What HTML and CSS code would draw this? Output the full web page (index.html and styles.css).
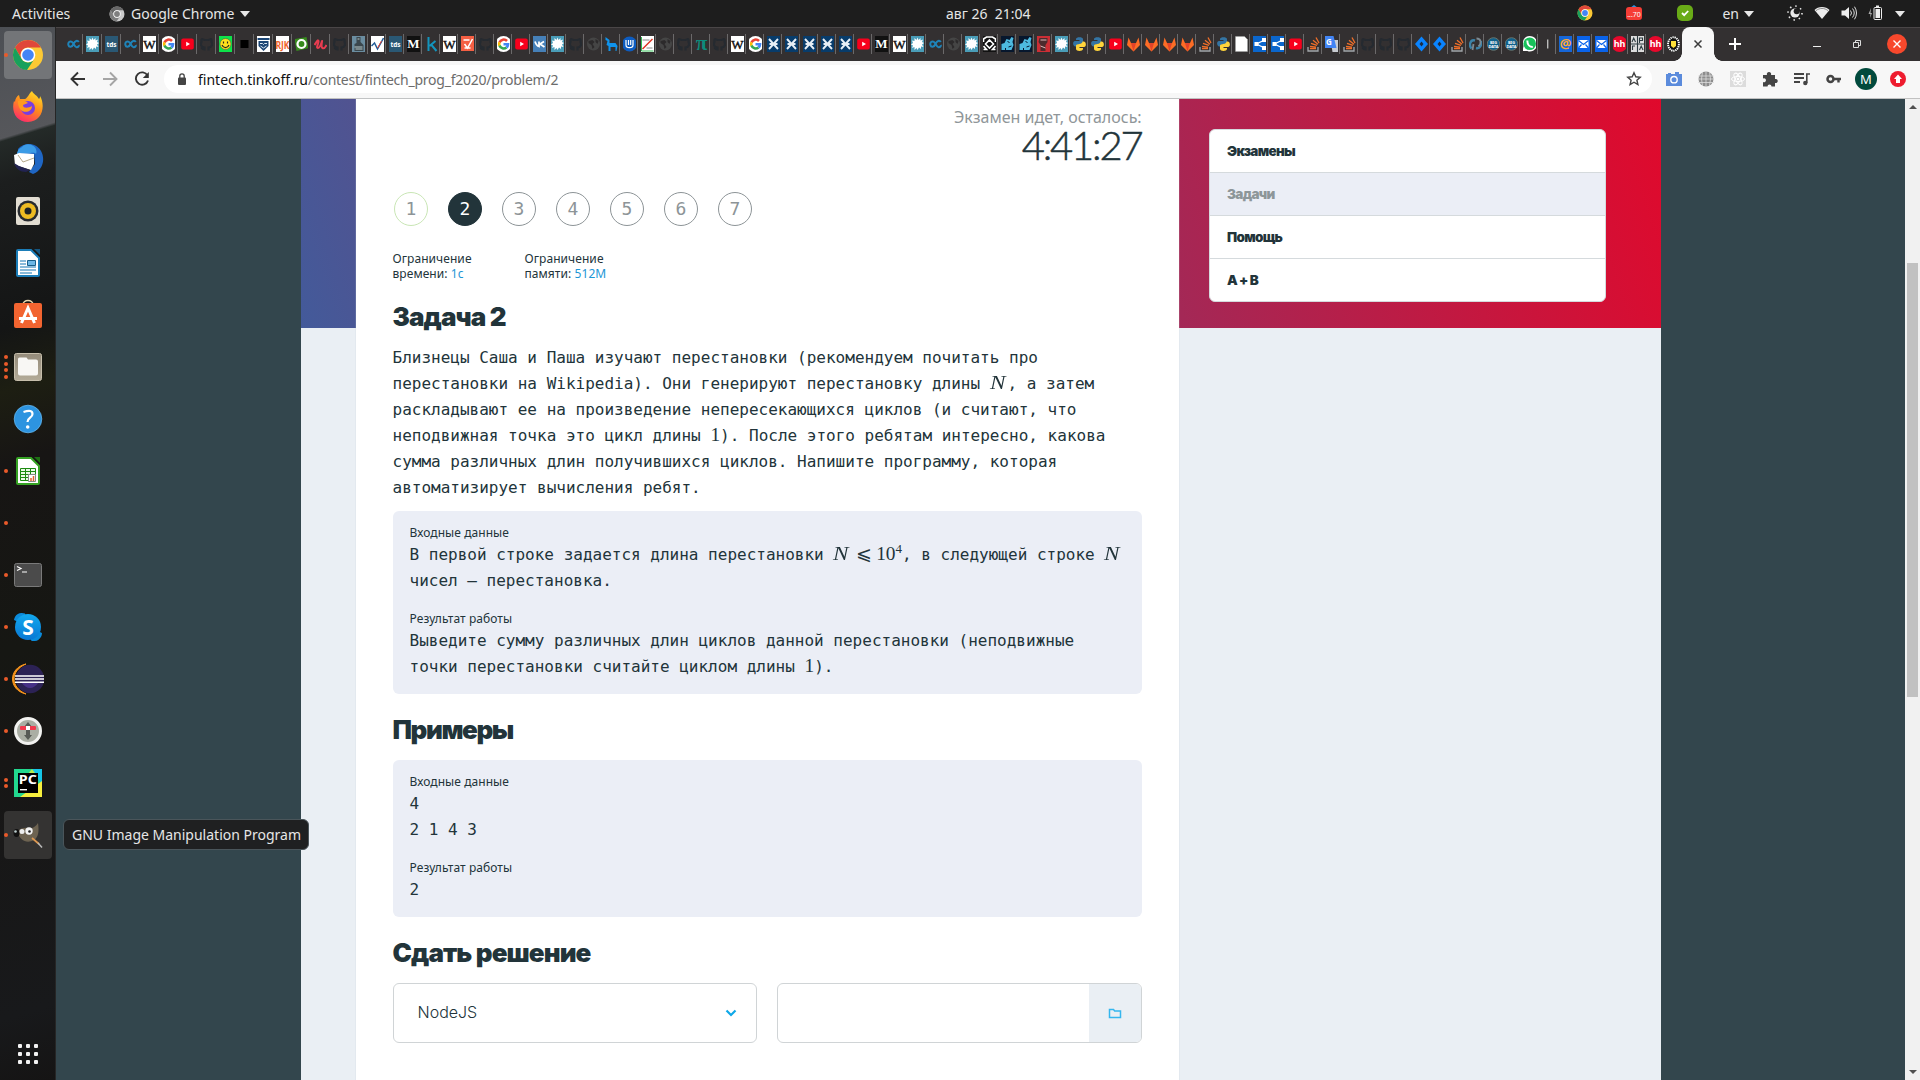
FILE: index.html
```html
<!DOCTYPE html>
<html lang="ru">
<head>
<meta charset="utf-8">
<title>Задача 2</title>
<link rel="stylesheet" href="styles.css">
</head>
<body>
<svg class="gradients" width="0" height="0">
  <defs>
    <linearGradient id="fx" x1="0.8" y1="0" x2="0.3" y2="1"><stop offset="0" stop-color="#ffe226"/><stop offset=".5" stop-color="#ff8a1e"/><stop offset="1" stop-color="#ff2a6a"/></linearGradient>
    <linearGradient id="sky" x1="0" y1="0" x2="0" y2="1"><stop offset="0" stop-color="#12a8ee"/><stop offset="1" stop-color="#0a78d4"/></linearGradient>
    <linearGradient id="tan" x1="0" y1="0" x2="0" y2="1"><stop offset="0" stop-color="#948b7a"/><stop offset="1" stop-color="#b3ab98"/></linearGradient>
  </defs>
</svg>
<svg class="symbols">
  <symbol id="coursera" viewBox="1.5 0 13 16"><path d="M13.300 6C12 4 9.500 4.500 8 8S3.500 11.500 2.900 9s1.500-4.500 3.600-3S9 11 11 11.200s2.500-1.500 2.200-2.200" fill="none" stroke="#1f83b8" stroke-width="2"/></symbol>
  <symbol id="star" viewBox="1.5 0 13 16"><path fill="#4a9db8" d="M0 0h16v16H0z"/><path fill="#fff" d="M8 1.500l1 2.500 2-2v2.500l2.500-1-1 2.500 2 1-2 1.500 1.500 2.500-2.500-.5v2.500l-2-1.500L8 14l-1-2-2 2 0-3-2.500 1 1-2.500-2-1 2-1.500L2.500 4.500 5 5V2l2 2z"/></symbol>
  <symbol id="tds" viewBox="1.5 0 13 16"><path fill="#2a5874" d="M0 0h16v16H0z"/><text x="8" y="10.500" font-size="6.500" font-weight="700" text-anchor="middle" fill="#fff">tds</text></symbol>
  <symbol id="wiki" viewBox="1.5 0 13 16"><path fill="#fff" d="M0 0h16v16H0z"/><text class="serif" x="8" y="12.700" font-size="13" text-anchor="middle" fill="#111" stroke="#111" stroke-width=".4">W</text></symbol>
  <symbol id="google" viewBox="1.5 0 13 16"><circle cx="8" cy="8" r="8" fill="#fff"/><g fill="none" stroke-width="2.600"><path d="M4 6.500A4.500 4.500 0 0 1 11.500 5" stroke="#ea4335"/><path d="M4 9.800a4.500 4.500 0 0 1 0-3.500" stroke="#fbbc05"/><path d="M4 9.500a4.500 4.500 0 0 0 7 2" stroke="#34a853"/><path d="M8 8.200h4.500a4.500 4.500 0 0 1-1.500 3.300" stroke="#4285f4"/></g></symbol>
  <symbol id="yt" viewBox="1.5 0 13 16"><rect x="1.700" y="2.500" width="12.600" height="11" rx="2" fill="#f8001c"/><path fill="#fff" d="M6.700 5.700v4.600L10.500 8z"/></symbol>
  <symbol id="gh" viewBox="1.5 0 13 16"><path fill="none" stroke="#252a30" stroke-width="2.200" d="M6 14.500v-3C2 11 2 8 3 6c-.3-1.500 0-3 .5-3L6 4h4l2.500-1c.5 0 .8 1.500.5 3 1 2 1 5-3 5.500v3M6 13c-2 .5-2-1-3.500-1.500"/></symbol>
  <symbol id="globe" viewBox="1.5 0 13 16"><circle cx="8" cy="8" r="6.500" fill="#454545"/><path fill="#2c2a2b" d="M3 5l4-1 2 2-2 2 2 3-2 2-1-4-3-2zM10 3l3 2-1 3-2-2z"/></symbol>
  <symbol id="smile" viewBox="1.5 0 13 16"><path fill="#0de24a" d="M0 0h16v16H0z"/><circle cx="8" cy="8" r="5.500" fill="#ffe21d" stroke="#554" stroke-width=".6"/><path d="M6 5.500v2M10 5.500v2M4.500 9c1.500 3.500 5.500 3.500 7 0" stroke="#222" stroke-width="1.200" fill="none"/></symbol>
  <symbol id="square" viewBox="1.5 0 13 16"><path d="M4 4h8v8H4z"/></symbol>
  <symbol id="crest" viewBox="1.5 0 13 16"><path fill="#fff" d="M0 0h16v16H0z"/><path fill="#1c4675" d="M2 2h12v2H2zM3 5h10v5l-5 5-5-5z"/><path d="M4.500 7.500h2.500l1 1 1-1h2.500M5 10l3 2 3-2" stroke="#dce8f2" fill="none"/></symbol>
  <symbol id="rjk" viewBox="1.5 0 13 16"><path fill="#fff" d="M0 0h16v16H0z"/><text x="8" y="12.500" font-size="11" font-weight="700" textLength="14" lengthAdjust="spacingAndGlyphs" text-anchor="middle" fill="#f0642c">RJK</text></symbol>
  <symbol id="ring" viewBox="1.5 0 13 16"><path fill="#378b1d" d="M1 3l12-2 2 11-12 3z"/><circle cx="8" cy="8" r="4" fill="none" stroke="#fff" stroke-width="2.200"/></symbol>
  <symbol id="udemy" viewBox="1.5 0 13 16"><path d="M2 9c2-3 3.500-6 4-4S3 12 5.500 12 9 6 9.500 5 8 11 10 12s3-1 4-3" fill="none" stroke="#e83c50" stroke-width="2"/></symbol>
  <symbol id="statue" viewBox="1.5 0 13 16"><path fill="#6b8da0" d="M0 0h16v16H0z"/><path fill="#3b474d" d="M6 1h4v5l3 3v6H4V8l2-1z"/><path d="M4 11h8M5 13h7M7 3h2" stroke="#bcc" /></symbol>
  <symbol id="chart" viewBox="1.5 0 13 16"><path fill="#fff" d="M0 0h16v16H0z"/><path d="M2 10l3-3 3 6 6-11" fill="none" stroke="#215b96" stroke-width="1.500"/><path d="M8 12l4-7" stroke="#e43"/></symbol>
  <symbol id="medium" viewBox="1.5 0 13 16"><path fill="#111" d="M0 0h16v16H0z"/><text class="serif" x="8" y="12.300" font-size="13" font-weight="700" text-anchor="middle" fill="#fff">M</text></symbol>
  <symbol id="kaggle" viewBox="1.5 0 13 16"><path d="M5 1v14M12 5l-6 5M8 9l5 6" stroke="#1394bd" stroke-width="2" fill="none"/></symbol>
  <symbol id="check" viewBox="1.5 0 13 16"><path fill="#f55f43" d="M1.500 0h13v15h-13z"/><path d="M4 4h6M5 8l3 4 5-9M5 12h6" stroke="#fff" stroke-width="1.500" fill="none"/></symbol>
  <symbol id="vk" viewBox="1.5 0 13 16"><path fill="#4680b8" d="M0 0h16v16H0z"/><path d="M3.500 5.500c1 3 2 4.500 4 5V5.500M12.500 5.500L8.500 8l4.500 3" stroke="#fff" stroke-width="1.800" fill="none"/></symbol>
  <symbol id="llama" viewBox="1.5 0 13 16"><path fill="#0f93ec" d="M2 1l4 3v3h6l2 3-1 5h-1v-4H7v4H5v-5L3 9l1-4-2-1z"/></symbol>
  <symbol id="iu" viewBox="1.5 0 13 16"><circle cx="8" cy="8" r="7.500" fill="#0d5cc0"/><path d="M4.500 4v5c0 3.500 7 3.500 7 0V4M7 4v5M9.200 4v5" fill="none" stroke="#fff" stroke-width="1.200"/></symbol>
  <symbol id="plot" viewBox="1.5 0 13 16"><path fill="#fff" d="M0 0h16v16H0z"/><path d="M3 13L13 3" stroke="#d32" stroke-width="1.500"/><path d="M2 1v14h12" stroke="#3b5" fill="none"/><path d="M3 4h7M7 12h6" stroke="#888"/></symbol>
  <symbol id="pi" viewBox="1.5 0 13 16"><text class="serif" x="8" y="13.500" font-size="21" font-weight="700" text-anchor="middle" fill="#0d8b7c">π</text></symbol>
  <symbol id="cross" viewBox="1.5 0 13 16"><path fill="#083c6b" d="M0 0h16v16H0z"/><path d="M3.500 3l4.500 5 4.500-5M3.500 13L8 8l4.500 5M4 8h8" stroke="#e6eef5" stroke-width="1.900" fill="none"/></symbol>
  <symbol id="diamond" viewBox="1.5 0 13 16"><path fill="#111" d="M0 0h16v16H0z"/><path d="M2 6V3l3-2h6l3 2v3M8 4l4 4-4 4-4-4zM2 10l3 3.500H2M14 10l-3 3.500h3" fill="none" stroke="#fff" stroke-width="1.600"/></symbol>
  <symbol id="horse" viewBox="1.5 0 13 16"><path fill="#07172d" d="M0 0h16v16H0z"/><path fill="#4dbbe0" d="M2 14V8l3-1 2-4 3 1 2-3 2 1-1 4 1 3-2 5z"/><path stroke="#07172d" d="M6 15v-3M9 11l3-1M8 5l2 2"/></symbol>
  <symbol id="red" viewBox="1.5 0 13 16"><path fill="#cc2e35" d="M0 0h16v16H0z"/><path fill="#4c2b2d" d="M4 2h8v4l-2 3v6H5V9L3 6z"/><path d="M5 4h6M5 10l5 2" stroke="#dbb"/></symbol>
  <symbol id="python" viewBox="1.5 0 13 16"><path fill="#3474a3" d="M4.500 3c0-2.500 7-2.500 7 0v3.500c0 2-6.500.5-6.500 4H3.500C1 10 1 5 3.500 5H8V4H4.500z"/><path fill="#ffd43b" d="M11.500 13c0 2.500-7 2.500-7 0V9.500c0-2 6.500-.5 6.500-4h1.500C15 6 15 11 12.500 11H8v1h3.500z"/></symbol>
  <symbol id="gitlab" viewBox="1.5 0 13 16"><path fill="#fc6d26" d="M3 1.500L1.500 9 8 15.500 14.500 9 13 1.500 10.500 7h-5z"/><path fill="#e24329" d="M5.500 7h5L8 15.500z"/></symbol>
  <symbol id="so" viewBox="1.5 0 13 16"><path d="M2.500 11v4h10v-4" fill="none" stroke="#a3a7ab" stroke-width="1.300"/><path d="M4.500 12.500h6M4.500 10.300l6 .8M5.500 7.300l6 2M7.500 4.300l5 4M10.500 1.500l3 5.500" stroke="#f2702a" stroke-width="1.300"/></symbol>
  <symbol id="doc" viewBox="1.5 0 13 16"><path fill="#fff" stroke="#aaa" stroke-width=".4" d="M2 .5h9l3 3v12H2z"/></symbol>
  <symbol id="share" viewBox="1.5 0 13 16"><path fill="#0b66cc" d="M0 0h16v16H0z"/><path d="M13 4L5 8l8 4" stroke="#fff" stroke-width="1.300" fill="none"/><path fill="#fff" d="M3 6h4v4H3zM10.500 2h4v4h-4zM10.500 10h4v4h-4z"/></symbol>
  <symbol id="translate" viewBox="1.5 0 13 16"><path fill="#c8ccd2" d="M7 4h8v12H9z"/><path fill="#4285f4" d="M1 0h9l3 12H1z"/><text x="5.500" y="9" font-size="8" font-weight="700" text-anchor="middle" fill="#fff">G</text></symbol>
  <symbol id="jira" viewBox="1.5 0 13 16"><path fill="#0a84ff" d="M8 .5L14.500 8 8 15.500 1.500 8z"/><path fill="#1b2c44" d="M8 5.500L10 8l-2 2.500L6 8z"/></symbol>
  <symbol id="swirl" viewBox="1.5 0 13 16"><path d="M7.500 4.500C3 3 1 9 4 12.500M8.500 12c4 1 6-3 5-7" fill="none" stroke="#3c83a8" stroke-width="2.400"/><path d="M9 2.500c5 0 5 5 2 8M6 8l-1 6" stroke="#7d8a92" fill="none" stroke-width="1.800"/></symbol>
  <symbol id="bigdata" viewBox="1.5 0 13 16"><circle cx="8" cy="8" r="6.300" fill="#10618b" stroke="#68736c" stroke-width="1"/><text x="8" y="7.500" font-size="4" font-weight="700" text-anchor="middle" fill="#fff">BIG</text><text x="8" y="11.700" font-size="4" font-weight="700" text-anchor="middle" fill="#fff">DATA</text></symbol>
  <symbol id="wa" viewBox="1.5 0 13 16"><path fill="#fff" d="M1 15l1-5C0 4 4 0 8 0s8 3 8 8-6 9-10 7z"/><circle cx="8.200" cy="7.800" r="6.300" fill="#17c15a"/><path d="M5.800 4.500c0 4 2.500 6.500 5.500 6.500" stroke="#fff" stroke-width="2" fill="none"/></symbol>
  <symbol id="bar" viewBox="1.5 0 13 16"><path fill="#bbb" d="M7.500 3.500h1.400v9H7.500z"/></symbol>
  <symbol id="at" viewBox="1.5 0 13 16"><path fill="#1666d8" d="M0 0h16v16H0z"/><text x="8" y="12" font-size="13" font-weight="700" text-anchor="middle" fill="#ffa930">@</text></symbol>
  <symbol id="mail" viewBox="1.5 0 13 16"><path fill="#0a63ea" d="M0 0h16v16H0z"/><path fill="#fff" d="M3 4h10v8H3z"/><path d="M3 4.500l5 4 5-4M3 12l3-3.500M13 12l-3-3.500" stroke="#0a63ea" stroke-width="1.200" fill="none"/></symbol>
  <symbol id="hh" viewBox="1.5 0 13 16"><circle cx="8" cy="8" r="8" fill="#e8082c"/><text x="8" y="11.300" font-size="9" font-weight="700" text-anchor="middle" fill="#fff">hh</text></symbol>
  <symbol id="ap" viewBox="1.5 0 13 16"><path fill="#ddd" d="M0 0h16v16H0z"/><path d="M2.500 6l1.700-4L6 6M10 7V2h3v2.500h-3M3 14v-4h2.500M10 14l1.700-4 1.800 4M8 0v16M1 8h14" stroke="#2c3a40" stroke-width="1.100" fill="none"/></symbol>
  <symbol id="eagle" viewBox="1.5 0 13 16"><ellipse cx="8" cy="8" rx="6.500" ry="8" fill="#111"/><ellipse cx="8" cy="8" rx="5.400" ry="6.800" fill="none" stroke="#fff" stroke-width="2" stroke-dasharray="1.400 .7"/><path fill="#ffe03a" d="M5.500 5h5v5l-2.500 2-2.500-2z"/></symbol>
  <symbol id="chrome" viewBox="0 0 32 32"><circle cx="16" cy="16" r="15" fill="#fcc934"/><path fill="#e0473a" d="M3 8.500A15 15 0 0 1 29 8.500H16A7.500 7.500 0 0 0 9.500 19.700z"/><path fill="#18a05c" d="M3 8.500A15 15 0 0 0 15 31l7.500-11.200a7.500 7.500 0 0 1-13 0z"/><circle cx="16" cy="16" r="7.300" fill="#fff"/><circle cx="16" cy="16" r="5.800" fill="#4385f5"/></symbol>
</svg>

<header class="topbar">
  <span class="activities">Activities</span>
  <div class="appmenu">
    <svg class="grey" width="16" height="16"><use href="#chrome"/></svg>
    <span class="appname">Google Chrome</span>
    <i class="caret"></i>
  </div>
  <span class="clock">авг 26&nbsp; 21:04</span>
  <div class="tray">
    <svg width="16" height="16"><use href="#chrome"/></svg>
    <svg width="16" height="16" viewBox="0 0 16 16"><path fill="#2f93e0" d="M4 3l4-3 4 3z"/><rect y="2" width="16" height="13" rx="3" fill="#f63d36"/><text x="8" y="11.500" font-size="7" text-anchor="middle" fill="#fff">...70</text></svg>
    <svg width="16" height="16" viewBox="0 0 16 16"><rect width="16" height="16" rx="5" fill="#69ab17"/><path d="M5 8l2.200 2.200L11.200 6" fill="none" stroke="#fff" stroke-width="1.800"/></svg>
    <span class="lang">en</span>
    <i class="caret"></i>
    <svg width="16" height="16" viewBox="0 0 16 16"><circle cx="8" cy="8" r="4.600" fill="#e8e8e8"/><circle cx="9.700" cy="6.300" r="3" fill="#1d1d1d"/><circle cx="8" cy="8" r="7" fill="none" stroke="#e8e8e8" stroke-width="1.600" stroke-dasharray="1.500 4"/></svg>
    <svg width="16" height="16" viewBox="0 0 16 16"><path d="M8 14L.5 5C4 1 12 1 15.500 5z" fill="#eee"/><path d="M2 5.700c3.500-3 8.500-3 12 0" fill="none" stroke="#777" stroke-width=".8"/></svg>
    <svg width="16" height="16" viewBox="0 0 16 16"><path d="M.5 5.500H4L8 2v12l-4-3.500H.5z" fill="#eee"/><path d="M9.500 5.500q2 2.500 0 5M11.500 3.500q3.500 4.500 0 9M13.500 1.700q4 6.300 0 12.600" stroke="#ddd" fill="none"/></svg>
    <svg width="16" height="16" viewBox="0 0 16 16"><path d="M3 3L.5 9h2L2 13l2-5H2.500z" fill="#aaa"/><path d="M8 .5h3v2H8z" fill="#eee"/><rect x="6" y="2.500" width="7.500" height="12" rx="1" fill="none" stroke="#eee"/><path d="M7.500 4h4.500v9H7.500z" fill="#eee"/></svg>
    <i class="caret"></i>
  </div>
</header>

<div class="desktop">
  <nav class="dock">
    <div class="app on"><span class="dots"><b></b></span><svg width="32" height="32"><use href="#chrome"/></svg></div>
    <div class="app"><svg width="32" height="32" viewBox="0 0 32 32"><path fill="url(#fx)" d="M20 0c1 3 5 4 7 8 1-1 1-2 1-3 6 10 2 26-12 26C4 31-1 20 2 10l1 1c0-3 2-6 4-7l1 4h5c3-1 4-6 7-8z"/><circle cx="16" cy="17" r="7" fill="#7a3de0"/><path fill="#ff9a1e" d="M6 10c4-2 8 0 10 2l-5 2c0 4 6 3 9 1 0 6-8 8-12 3-2-3-2-6-2-8z"/></svg></div>
    <div class="app"><svg width="32" height="32" viewBox="0 0 32 32"><path fill="#1f66c4" d="M6 6C12-1 24-1 29 8c5 9 1 20-8 23l-4-2 6-8-1-10-16 1z"/><path fill="#3b9be6" d="M10 4c5-6 17-1 14 7-3-3-7 1-15-1L5 14C4 10 6 6 10 4z"/><path fill="#fff" d="M2 12l5-2 15 1v10l-3 6-16-5z"/><path d="M6 12l5 7 11-4" fill="none" stroke="#b5a98c"/><path fill="#222351" d="M2 20l5 3 11 4-4 2C8 29 4 26 2 20z"/></svg></div>
    <div class="app"><svg width="32" height="32" viewBox="0 0 32 32"><rect x="4" y="2" width="24" height="28" rx="2" fill="#e2ddd2"/><circle cx="16" cy="16" r="10.500" fill="#272a2f"/><circle cx="16" cy="16" r="8" fill="#eebb22"/><circle cx="16" cy="16" r="3.500" fill="#1d2226"/></svg></div>
    <div class="app"><svg width="32" height="32" viewBox="0 0 32 32"><path d="M6 3h13l8 8v17a1 1 0 0 1-1 1H6a1 1 0 0 1-1-1V4a1 1 0 0 1 1-1z" fill="#fff" stroke="#1b7db8" stroke-width="2"/><path fill="#15557f" d="M22 2h6v6z"/><path d="M8 14h6M8 17h6M8 20h16M8 23h16M8 26h12" stroke="#1376b5"/><path fill="#6bb7e6" stroke="#175e8a" d="M15.500 13.500h8v5h-8z"/></svg></div>
    <div class="app"><svg width="32" height="32" viewBox="0 0 32 32"><path d="M11 6c0-6 10-6 10 0" stroke="#e9d9b0" stroke-width="1.500" fill="none"/><rect x="2" y="4" width="28" height="25" rx="2" fill="#f26430"/><path d="M9.500 24L16 9l6.500 15M7 19.500h18" stroke="#fff" stroke-width="3" fill="none"/></svg></div>
    <div class="app"><span class="dots"><b></b><b></b><b></b><b></b></span><svg width="32" height="32" viewBox="0 0 32 32"><rect x="2.500" y="2.500" width="27" height="27" rx="2" fill="url(#tan)" stroke="#c7bfac"/><path d="M6 8q0-1.500 1.500-1.500h7l1.500 2h8q2 0 2 2v12q0 2-2 2H8q-2 0-2-2z" fill="#f8f7f4"/></svg></div>
    <div class="app"><svg width="32" height="32" viewBox="0 0 32 32"><circle cx="16" cy="16" r="13.800" fill="#2d94e0" stroke="#63b6ee" stroke-width=".8"/><path d="M11.500 9q9-3 9 2c0 4-5 3.500-5 8" stroke="#fff" stroke-width="2.200" fill="none"/><circle cx="15.700" cy="24" r="1.800" fill="#fff"/></svg></div>
    <div class="app"><span class="dots"><b></b></span><svg width="32" height="32" viewBox="0 0 32 32"><path d="M6 3h13l8 8v17a1 1 0 0 1-1 1H6a1 1 0 0 1-1-1V4a1 1 0 0 1 1-1z" fill="#fff" stroke="#36a324" stroke-width="2"/><path fill="#1c6f12" d="M22 2h6v6z"/><path fill="#eafbe6" stroke="#1d8a12" d="M8.500 13.500h15v12h-15zM8 16.500h16M8 19.500h16M8 22.500h16M13.500 13v13M18.500 13v13"/><path fill="#fff" stroke="#888" d="M16.500 19.500h7v7h-7z"/><path d="M19 26v-3M21.500 26v-5" stroke="#e2622b" stroke-width="1.500"/></svg></div>
    <div class="app"><span class="dots"><b></b></span></div>
    <div class="app"><span class="dots"><b></b></span><svg width="32" height="32" viewBox="0 0 32 32"><rect x="2.500" y="4.500" width="27" height="23" rx="2" fill="#4b4b4b" stroke="#7a7a7a"/><path d="M5 7.500l4 2-4 2M10 13h5" stroke="#fff" fill="none" stroke-width="1.200"/></svg></div>
    <div class="app"><span class="dots"><b></b></span><svg width="32" height="32" viewBox="0 0 32 32"><path fill="#0b8bdb" d="M2 9a8 8 0 0 1 11-6.500l6 27A8 8 0 0 0 30 22z"/><circle cx="16" cy="16" r="13" fill="url(#sky)"/><text x="16" y="23.500" font-size="21" font-weight="700" text-anchor="middle" fill="#fff">S</text></svg></div>
    <div class="app"><span class="dots"><b></b></span><svg width="32" height="32" viewBox="0 0 32 32"><path d="M14 1C-4 5-4 27 14 31-2 24-2 8 14 1z" fill="#f7941e" stroke="#f7941e"/><circle cx="18" cy="16" r="14.300" fill="#2c2255"/><path fill="#473188" d="M9 19h18q-9 12-18 0z"/><path d="M3 13h29M3 16h29M3 19.300h29" stroke="#fff" stroke-width="1.400"/></svg></div>
    <div class="app"><span class="dots"><b></b></span><svg width="32" height="32" viewBox="0 0 32 32"><circle cx="16" cy="16" r="12.500" fill="#aaaea4" stroke="#f2f2f0" stroke-width="3"/><path fill="#575a56" d="M16 7l4 5h-2v8h2l-4 5-4-5h2v-8h-2z"/><rect x="8" y="11" width="16" height="4" rx="1" fill="#f03a4e"/><path fill="#fff" d="M14 11h4v4h-4z"/></svg></div>
    <div class="app"><span class="dots"><b></b><b></b></span><svg width="32" height="32" viewBox="0 0 32 32"><path fill="#22d88f" d="M2 2h28v28H2z"/><path fill="#15c6e8" d="M20 2h10v16z"/><path fill="#f6ee3d" d="M30 14v16H8z"/><path fill="#b4ec50" d="M15 8l5-6 3 4z"/><path d="M6 6h20v20H6z"/><text x="15.800" y="17.300" font-size="13" font-weight="700" text-anchor="middle" fill="#fff" textLength="18" lengthAdjust="spacingAndGlyphs">PC</text><path fill="#fff" d="M8 22h7v1.400H8z"/></svg></div>
    <div class="app hover"><span class="dots"><b></b></span><svg width="32" height="32" viewBox="0 0 32 32"><path fill="#6d6351" d="M5 12c4-3 8-4 12-3 4 1 7-2 9-5 1 7 1 14-4 17-7 4-14 1-17-9z"/><ellipse cx="4.500" cy="14" rx="3" ry="4" fill="#111"/><circle cx="3.500" cy="12.500" r="1.300" fill="#bcc"/><circle cx="10" cy="12.500" r="2.500" fill="#eee"/><circle cx="17" cy="12" r="3.700" fill="#f4f4f4"/><circle cx="17.500" cy="12.500" r="1.300" fill="#222"/><path d="M20 19l7 6" stroke="#dd9850" stroke-width="1.800"/><path d="M26 24l4 4.500" stroke="#bbb" stroke-width="1.500"/></svg></div>
    <div class="launcher"><svg width="20" height="20" viewBox="0 0 20 20" fill="#f2f2f2"><rect width="4" height="4" rx="1"/><rect x="8" width="4" height="4" rx="1"/><rect x="16" width="4" height="4" rx="1"/><rect y="8" width="4" height="4" rx="1"/><rect x="8" y="8" width="4" height="4" rx="1"/><rect x="16" y="8" width="4" height="4" rx="1"/><rect y="16" width="4" height="4" rx="1"/><rect x="8" y="16" width="4" height="4" rx="1"/><rect x="16" y="16" width="4" height="4" rx="1"/></svg></div>
    <div class="tooltip">GNU Image Manipulation Program</div>
  </nav>

  <div class="browser">
    <div class="tabstrip">
      <div class="tabs" id="tabs"></div>
      <div class="active-tab"><svg width="10" height="10" viewBox="0 0 10 10"><path d="M1.500 1.500l7 7M8.500 1.500l-7 7" stroke="#3b3b3b" stroke-width="1.500"/></svg></div>
      <svg class="plus" width="12" height="12" viewBox="0 0 12 12"><path d="M6 0v12M0 6h12" stroke="#fff" stroke-width="2"/></svg>
      <div class="winbtns">
        <svg width="8" height="10" viewBox="0 0 8 10"><path d="M0 7.500h8" stroke="#eee"/></svg>
        <svg width="9" height="9" viewBox="0 0 9 9"><path d="M.5 2.500h5v5h-5zM2.500 2V.5h5v5H6" fill="none" stroke="#ddd"/></svg>
        <svg width="20" height="20" viewBox="0 0 20 20"><circle cx="10" cy="10" r="10" fill="#f8482c"/><path d="M6.500 6.500l7 7M13.500 6.500l-7 7" stroke="#fff" stroke-width="1.400"/></svg>
      </div>
    </div>
    <div class="toolbar">
      <div class="navbtns">
        <svg width="16" height="16" viewBox="0 0 16 16"><path d="M15 8H2M8 1.500L1.500 8 8 14.500" fill="none" stroke="#333" stroke-width="1.900"/></svg>
        <svg width="16" height="16" viewBox="0 0 16 16"><path d="M1 8h13M8 1.500L14.500 8 8 14.500" fill="none" stroke="#a5a5a5" stroke-width="1.900"/></svg>
        <svg width="16" height="16" viewBox="0 0 16 16"><path d="M13.500 4.500A6.200 6.200 0 1 0 14 9.500" fill="none" stroke="#333" stroke-width="1.900"/><path fill="#333" d="M14.800 1v6h-6z"/></svg>
      </div>
      <div class="urlbar">
        <svg width="10" height="12" viewBox="0 0 10 12"><rect x="1" y="4.500" width="8" height="7.500" rx="1" fill="#444"/><path d="M2.800 5V3a2.200 2.200 0 0 1 4.400 0v2" fill="none" stroke="#444" stroke-width="1.300"/></svg>
        <span class="host">fintech.tinkoff.ru</span><span class="path">/contest/fintech_prog_f2020/problem/2</span>
        <svg class="fav" width="16" height="16" viewBox="0 0 16 16"><path d="M8 1.800l1.800 4 4.400.4-3.300 3 1 4.300L8 11.200l-3.900 2.300 1-4.300-3.300-3 4.400-.4z" fill="none" stroke="#444" stroke-width="1.400"/></svg>
      </div>
      <div class="exts">
        <svg width="16" height="16" viewBox="0 0 16 16"><path fill="#5b8bdc" d="M0 3h2V2h3v1h4V1h4v2h3v12H0z"/><circle cx="8" cy="8.700" r="3.200" fill="none" stroke="#fff" stroke-width="1.400"/></svg>
        <svg width="16" height="16" viewBox="0 0 16 16"><circle cx="8" cy="8" r="7.500" fill="#8d8d8d"/><path d="M0 5h16M0 8h16M0 11.500h16M8 0v16M4.500 1q-2 7 0 14M11.500 1q2 7 0 14" stroke="#ddd" stroke-width=".8" fill="none"/></svg>
        <svg width="16" height="16" viewBox="0 0 16 16"><path fill="#dcdcdc" d="M0 0h16v16H0z"/><g fill="none" stroke="#fff"><ellipse cx="8" cy="8" rx="6.500" ry="2.600"/><ellipse cx="8" cy="8" rx="6.500" ry="2.600" transform="rotate(60 8 8)"/><ellipse cx="8" cy="8" rx="6.500" ry="2.600" transform="rotate(120 8 8)"/></g><circle cx="8" cy="8" r="1.300" fill="#fff"/></svg>
        <svg width="16" height="16" viewBox="0 0 16 16"><path fill="#444" d="M1 4h4a2.200 2.200 0 1 1 4 0h4v4a2.100 2.100 0 1 1 0 4v3.500H9.500a2 2 0 1 0-4 0H1V11a2 2 0 1 0 0-3.500z"/></svg>
        <svg width="16" height="16" viewBox="0 0 16 16"><path d="M0 3h10M0 7h10M0 11h6" stroke="#444" stroke-width="1.800"/><path d="M12.800 12V3H16" stroke="#444" stroke-width="1.600" fill="none"/><circle cx="11.300" cy="12" r="2.200" fill="#444"/></svg>
        <svg width="16" height="16" viewBox="0 0 16 16"><circle cx="4.500" cy="8" r="3" fill="none" stroke="#444" stroke-width="2.500"/><path d="M8 8h7M12.500 8v3.500" stroke="#444" stroke-width="2.400"/></svg>
        <span class="avatar">M</span>
        <svg width="16" height="16" viewBox="0 0 16 16"><circle cx="8" cy="8" r="8" fill="#ee1c2e"/><path fill="#fff" d="M8 3.500L12 8h-2v4H6V8H4z"/></svg>
      </div>
    </div>

    <div class="viewport">
      <div class="site">
        <main class="content">
          <div class="countdown">
            <div class="left-label">Экзамен идет, осталось:</div>
            <div class="timer">4:41:27</div>
          </div>
          <div class="steps">
            <span class="step done">1</span><span class="step current">2</span><span class="step">3</span><span class="step">4</span><span class="step">5</span><span class="step">6</span><span class="step">7</span>
          </div>
          <div class="limits">
            <div>Ограничение<br>времени: <em>1c</em></div>
            <div>Ограничение<br>памяти: <em>512M</em></div>
          </div>
          <h2>Задача 2</h2>
          <p class="mono statement">Близнецы Саша и Паша изучают перестановки (рекомендуем почитать про<br>перестановки на Wikipedia). Они генерируют перестановку длины <var>N</var>, а затем<br>раскладывают ее на произведение непересекающихся циклов (и считают, что<br>неподвижная точка это цикл длины <span class="num">1</span>). После этого ребятам интересно, какова<br>сумма различных длин получившихся циклов. Напишите программу, которая<br>автоматизирует вычисления ребят.</p>
          <section class="panel">
            <div class="label">Входные данные</div>
            <p class="mono">В первой строке задается длина перестановки <var>N</var><span class="num rel">⩽</span><span class="num">10<sup>4</sup></span>, в следующей строке <var>N</var><br>чисел — перестановка.</p>
            <div class="label">Результат работы</div>
            <p class="mono">Выведите сумму различных длин циклов данной перестановки (неподвижные<br>точки перестановки считайте циклом длины <span class="num">1</span>).</p>
          </section>
          <h2 class="sub tight">Примеры</h2>
          <section class="panel">
            <div class="label">Входные данные</div>
            <p class="mono">4<br>2 1 4 3</p>
            <div class="label">Результат работы</div>
            <p class="mono">2</p>
          </section>
          <h2 class="sub">Сдать решение</h2>
          <div class="form">
            <div class="select"><span>NodeJS</span><svg width="12" height="10" viewBox="0 0 12 10"><path d="M1.500 2.500L6 7l4.500-4.500" fill="none" stroke="#0fa8e8" stroke-width="2.200"/></svg></div>
            <div class="file"><div class="browse"><svg width="14" height="12" viewBox="0 0 14 12"><path d="M1.500 10.500v-8h4l1.200 1.500h5.800v6.500z" fill="none" stroke="#35b6ee" stroke-width="1.500"/></svg></div></div>
          </div>
        </main>
        <aside class="menu">
          <a>Экзамены</a><a class="sel">Задачи</a><a>Помощь</a><a>A + B</a>
        </aside>
      </div>
      <div class="scrollbar"><i class="up"></i><div class="thumb"></div><i class="down"></i></div>
    </div>
  </div>
</div>
<script src="tabs.js"></script>
</body>
</html>
```
FILE: tabs.js
```js
// Favicons of the open tabs, left to right.
const open = `coursera star tds coursera wiki google yt gh smile square crest rjk ring udemy gh statue
chart tds medium kaggle wiki check gh google yt vk star gh globe llama iu plot globe gh pi gh wiki google
cross cross cross cross cross yt medium wiki star coursera globe star diamond horse horse red star
python python yt gitlab gitlab gitlab gitlab so python doc share share yt so translate so gh gh gh
jira jira so swirl bigdata bigdata wa bar at mail mail hh ap hh eagle`.split(/\s+/);

document.getElementById('tabs').innerHTML = open
  .map(name => `<span class="tab"><svg width="13" height="16"><use href="#${name}"/></svg></span>`)
  .join('');
```
FILE: styles.css
```css
* { box-sizing: border-box; }
body { margin: 0; width: 1920px; height: 1080px; overflow: hidden; display: flex; flex-direction: column; background: #33464d; font-family: "Noto Sans", sans-serif; }
svg { display: block; flex: none; }
svg text { font-family: "Noto Sans", sans-serif; }
svg text.serif { font-family: "Liberation Serif", serif; }
.gradients { position: absolute; }
.symbols { display: none; }

/* system bar */
.topbar { height: 27px; flex: none; background: #1d1d1d; color: #e6e6e6; display: grid; grid-template-columns: 109px 837px auto 1fr; align-items: center; font-size: 14px; line-height: 27px; white-space: nowrap; }
.activities { padding-left: 12px; }
.appmenu { display: flex; align-items: center; }
.appname { margin: 0 6px; }
.grey { filter: grayscale(1); }
.caret { width: 0; height: 0; border: 5px solid transparent; border-top: 6px solid #e8e8e8; border-bottom: 0; }
.tray { display: flex; justify-content: flex-end; align-items: center; padding-right: 15px; }
.tray svg { margin: 0 11px 2px 0; }
.tray svg:nth-of-type(1) { margin-right: 33px; }
.tray svg:nth-of-type(2) { margin-right: 35px; }
.tray svg:nth-of-type(3) { margin-right: 29px; }
.lang { margin-right: 5px; }
.lang + .caret { margin-right: 33px; }

/* dock */
.desktop { flex: 1; min-height: 0; display: flex; }
.dock { position: relative; width: 56px; flex: none; padding-top: 2px; display: flex; flex-direction: column; border-right: 1px solid #262626; background: linear-gradient(163deg, #4c4f54 0, #56575b 107px, #242a28 110px, #1c1e1e 150px, #141515 290px, #1d1e12 350px, #171514 420px, #161713 600px, #171615 700px, #18191b 950px, #151414); }
.app { position: relative; width: 48px; height: 48px; margin: 2px 4px; border-radius: 4px; display: flex; align-items: center; justify-content: center; }
.on { background: #737578; }
.hover { background: #343332; }
.dots { position: absolute; left: 0; top: 0; height: 100%; display: flex; flex-direction: column; justify-content: center; gap: 2.5px; }
.dots b { width: 4px; height: 4px; border-radius: 50%; background: #ea5a2a; }
.launcher { margin-top: auto; padding: 0 0 16px 18px; }
.tooltip { position: absolute; z-index: 5; left: 63px; top: 792px; width: 246px; height: 31px; padding-left: 8px; line-height: 29px; border: 1px solid #4a555a; border-radius: 6px; background: #1f2021; color: #e6e6e6; font-size: 14px; white-space: nowrap; }

/* browser chrome */
.browser { flex: 1; display: flex; flex-direction: column; min-width: 0; }
.tabstrip { height: 34px; flex: none; background: #333031; border-top: 1px solid #4a4647; display: flex; align-items: center; padding: 0 0 1px 8px; }
.tabs { display: flex; }
.tab { width: 18px; height: 20px; padding: 2px 0 0 3px; border-right: 1px solid #6b696a; }
.tab:nth-child(-n+16) { width: 19px; }
.tab:last-child { border: 0; }
.active-tab { position: relative; width: 32px; height: 34px; margin: -1px 0; border-radius: 8px 8px 0 0; background: #f7f7f7; display: flex; align-items: center; justify-content: center; }
.active-tab::before, .active-tab::after { content: ""; position: absolute; bottom: 0; width: 8px; height: 8px; background: radial-gradient(circle at 0 0, transparent 7.5px, #f7f7f7 8px); }
.active-tab::before { left: -8px; }
.active-tab::after { right: -8px; background: radial-gradient(circle at 100% 0, transparent 7.5px, #f7f7f7 8px); }
.plus { margin-left: 15px; }
.winbtns { margin-left: auto; padding-right: 13px; display: flex; align-items: center; }
.winbtns svg:nth-child(2) { margin: 0 25px 0 32px; }
.toolbar { height: 38px; flex: none; background: #f7f7f7; border-bottom: 1px solid #c1c1c1; display: flex; align-items: center; padding: 0 14px 1px 14px; }
.navbtns { display: flex; gap: 16px; }
.urlbar { width: 1488px; height: 28px; margin-left: 14px; padding: 0 10px 0 13px; border-radius: 14px; background: #fff; display: flex; align-items: center; font-size: 14px; white-space: nowrap; }
.host { margin-left: 11px; color: #111; }
.path { color: #6c6c6c; letter-spacing: -.24px; }
.fav { margin-left: auto; }
.exts { margin-left: auto; display: flex; align-items: center; gap: 16px; }
.avatar { width: 22px; height: 22px; margin: 0 -3px; border-radius: 50%; background: #024a3d; color: #fff; font-size: 13px; line-height: 22px; text-align: center; }

/* page */
.viewport { flex: 1; min-height: 0; display: flex; padding-left: 245px; background: #33464d; }
.site { width: 1360px; padding-left: 55px; display: flex; align-items: flex-start; background: linear-gradient(72deg, #435a9a, #e0092c) 0 0 / 100% 229px no-repeat #eaeff4; }
.content { width: 823px; height: 981px; padding: 8px 37.5px 0 36.5px; background: #fff; color: #22343a; box-shadow: 0 0 1px #c5ced6; }
.countdown { text-align: right; }
.left-label { line-height: 20px; font-size: 16px; color: #8f9699; }
.timer { font-family: Lato, sans-serif; font-weight: 300; font-size: 40px; line-height: 37px; height: 38px; letter-spacing: -2.2px; color: #22343a; -webkit-text-stroke: .5px #22343a; }
.steps { display: flex; gap: 20px; margin: 27px 0 0 1.5px; }
.step { width: 34px; height: 34px; border: 1px solid #8d9497; border-radius: 50%; color: #8d9497; font: 18px/32px "DejaVu Sans Mono", monospace; text-align: center; }
.done { border-color: #c9e6b5; }
.current { background: #22343a; border-color: #22343a; color: #fff; }
.limits { display: flex; margin-top: 25px; font-size: 12px; line-height: 15px; letter-spacing: .07px; }
.limits div { width: 132px; }
.limits em { font-style: normal; color: #1d96d6; }
h2 { margin: 20px 0 0; font: 900 26px/32px Inter, sans-serif; letter-spacing: -.9px; white-space: nowrap; }
.tight { letter-spacing: -1.4px; }
p { margin: 0; }
.mono { font: 16px/26px "DejaVu Sans Mono", monospace; white-space: nowrap; }
.statement { margin-top: 12px; height: 155px; }
var, .num { font-family: "Liberation Serif", serif; font-size: 19.4px; line-height: 0; }
var { display: inline-block; width: 17.8px; transform: scaleX(1.2); transform-origin: left; }
.rel { margin: 0 4.5px; }
sup { font-size: 13px; line-height: 0; vertical-align: 7px; }
.panel { margin-top: 11px; padding: 14px 17px; border-radius: 6px; background: #ebeef6; }
.sub + .panel { margin-top: 14px; }
.label { height: 17px; line-height: 16px; font-size: 12px; letter-spacing: .07px; }
.mono + .label { margin-top: 17px; }
.form { display: flex; gap: 20px; margin-top: 14px; }
.select, .file { height: 60px; border: 1px solid #d0d4d6; border-radius: 6px; display: flex; align-items: center; overflow: hidden; }
.select { width: 364px; padding: 0 19px 0 24px; justify-content: space-between; font: 300 16px/20px Inter, sans-serif; }
.select span { margin-top: -3px; }
.file { width: 365px; justify-content: flex-end; }
.browse { width: 52px; height: 58px; padding-left: 1px; background: #eaeff4; display: flex; align-items: center; justify-content: center; }
.menu { width: 397px; height: 173px; margin: 30px 0 0 30px; background: #fff; border: 1px solid #d5dadd; border-radius: 6px; overflow: hidden; display: flex; flex-direction: column; }
.menu a { flex: 1; padding-left: 17px; border-bottom: 1px solid #d5dadd; color: #22343a; font: 900 13.500px/42px Inter, sans-serif; letter-spacing: -.7px; }
.menu a:last-child { border: 0; }
.menu .sel { background: #ebeef6; color: #8d9699; }
.scrollbar { width: 15px; margin-left: auto; background: #f1f1f1; display: flex; flex-direction: column; align-items: center; }
.up, .down { width: 0; height: 0; border: 4px solid transparent; }
.up { border-top: 0; border-bottom: 4px solid #505050; margin: 6px 0 154px; }
.thumb { width: 11px; height: 434px; background: #c1c1c1; }
.down { border-bottom: 0; border-top: 4px solid #505050; margin: auto 0 6px; }
```
